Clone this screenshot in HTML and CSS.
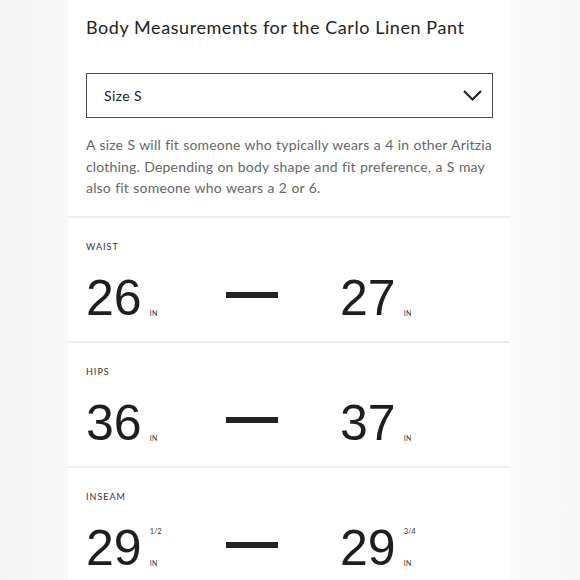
FILE: index.html
```html
<!DOCTYPE html>
<html>
<head>
<meta charset="utf-8">
<link rel="stylesheet" href="styles.css">
</head>
<body>
<div class="card">
  <div class="intro">
    <h1 class="title">Body Measurements for the Carlo Linen Pant</h1>
    <div class="select">
      <span class="select-text">Size S</span>
      <svg class="chevron" width="19" height="11" viewBox="0 0 19 11"><polyline points="1,1 9.5,9.5 18,1" fill="none" stroke="#1e1e1e" stroke-width="2"/></svg>
    </div>
    <p class="desc">A size S will fit someone who typically wears a 4 in other Aritzia clothing. Depending on body shape and fit preference, a S may also fit someone who wears a 2 or 6.</p>
  </div>
  <div class="section">
    <div class="label">WAIST</div>
    <div class="row">
      <div class="value"><span class="num">26</span><span class="suffix"><span class="unit">IN</span></span></div>
      <div class="dash"></div>
      <div class="value"><span class="num">27</span><span class="suffix"><span class="unit">IN</span></span></div>
    </div>
  </div>
  <div class="section">
    <div class="label">HIPS</div>
    <div class="row">
      <div class="value"><span class="num">36</span><span class="suffix"><span class="unit">IN</span></span></div>
      <div class="dash"></div>
      <div class="value"><span class="num">37</span><span class="suffix"><span class="unit">IN</span></span></div>
    </div>
  </div>
  <div class="section">
    <div class="label">INSEAM</div>
    <div class="row">
      <div class="value"><span class="num">29</span><span class="suffix"><span class="frac">1/2</span><span class="unit">IN</span></span></div>
      <div class="dash"></div>
      <div class="value"><span class="num">29</span><span class="suffix"><span class="frac">3/4</span><span class="unit">IN</span></span></div>
    </div>
  </div>
</div>
</body>
</html>
```
FILE: styles.css
```css
html, body {
  margin: 0;
  padding: 0;
  height: 580px;
  overflow: hidden;
}
body {
  background: linear-gradient(90deg, #f4f4f4 0%, #f8f8f8 12%, #fafafa 88%, #f7f7f7 100%);
  font-family: "Lato", "Liberation Sans", sans-serif;
  color: #222;
}
.card {
  margin-left: 68px;
  width: 442px;
  background: #fff;
  min-height: 580px;
}
.intro {
  padding: 15px 16px 17px 18px;
}
.title {
  margin: 0;
  font-size: 18px;
  line-height: 24px;
  font-weight: 400;
  color: #232323;
  letter-spacing: 0.57px;
}
.select {
  margin-top: 34px;
  margin-right: 1px;
  height: 45px;
  box-sizing: border-box;
  border: 1.5px solid #4a4a4a;
  display: flex;
  align-items: center;
  justify-content: space-between;
  padding: 0 10px 0 17px;
}
.select-text {
  font-size: 14px;
  color: #222;
  letter-spacing: 0.4px;
}
.chevron {
  display: block;
}
.desc {
  margin: 16px 0 0;
  font-size: 14px;
  line-height: 21.5px;
  color: #666;
  letter-spacing: 0.18px;
  word-spacing: 0.5px;
}
.section {
  border-top: 2px solid #efefef;
  height: 125px;
  box-sizing: border-box;
  padding: 23px 18px 0;
}
.label {
  font-size: 9px;
  line-height: 12px;
  letter-spacing: 1px;
  color: #333;
}
.row {
  display: flex;
  align-items: flex-start;
  margin-top: 20px;
}
.value {
  display: flex;
  min-width: 76px;
}
.num {
  font-family: "Liberation Sans", Arial, sans-serif;
  font-size: 50px;
  line-height: 50px;
  color: #1e1e1e;
}
.suffix {
  display: flex;
  flex-direction: column;
  justify-content: flex-end;
  height: 50px;
  box-sizing: border-box;
  padding: 5px 0 7px 8px;
  font-family: "Lato", "Liberation Sans", sans-serif;
}
.suffix .frac + .unit {
  margin-top: auto;
}
.frac {
  font-size: 7.5px;
  line-height: 8px;
  color: #333;
}
.unit {
  font-size: 7px;
  line-height: 6px;
  color: #333;
  letter-spacing: 0.3px;
}
.dash {
  width: 52px;
  height: 6px;
  background: #222;
  margin: 19px 62px 0 64px;
  flex: none;
}
```
